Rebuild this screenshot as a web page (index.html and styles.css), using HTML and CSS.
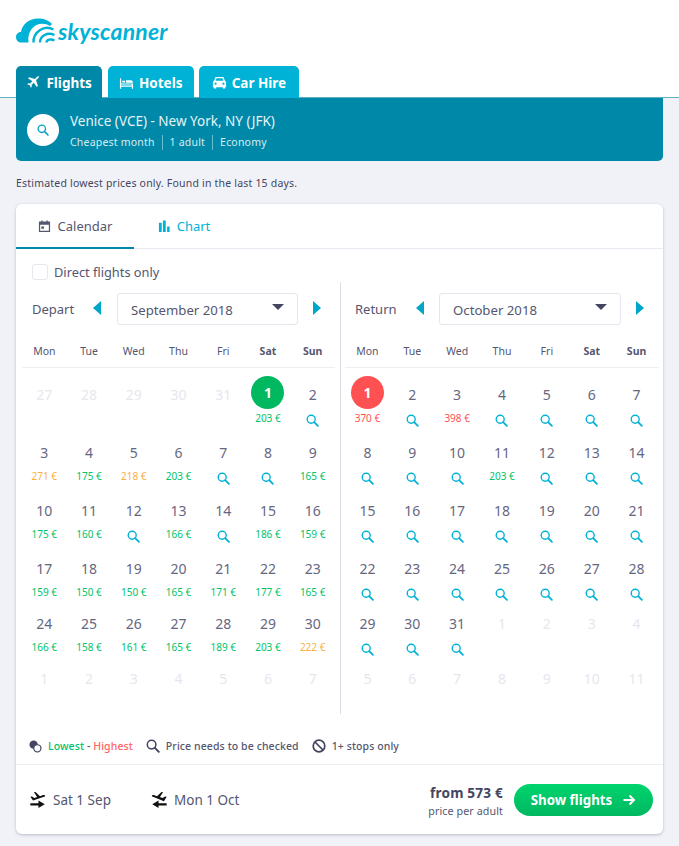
FILE: index.html
```html
<!DOCTYPE html>
<html lang="en">
<head>
<meta charset="utf-8">
<title>Skyscanner</title>
<link rel="stylesheet" href="styles.css">
</head>
<body>
<svg class="defs" width="0" height="0" aria-hidden="true">
  <symbol id="mag" viewBox="0 0 14 14"><circle cx="5.6" cy="5.6" r="4.3" fill="none" stroke="currentColor" stroke-width="1.500"/><path d="M8.800 8.800L12.800 12.800" stroke="currentColor" stroke-width="1.900" stroke-linecap="round"/></symbol>
  <symbol id="plane" viewBox="0 0 24 24"><path fill="currentColor" d="M21.500 2.500c-1-1-2.700-.8-3.800.3l-3.600 3.600L5 3.500 3.200 5.300l7 4.600-3.700 3.800-3-.5L2 14.700l4 1.700 1.800 4 1.500-1.500-.5-3 3.800-3.700 4.600 7 1.800-1.800-2.900-9.100 3.600-3.600c1.100-1.100 1.300-2.800.8-3.700z"/></symbol>
  <symbol id="out" viewBox="0 0 20 20"><path fill="currentColor" d="M1.500 6.500l1.800-.4 2.700 1.700L9 6.800 5.500 1.500 7.200 1l5 4.800 3.500-1.300c1-.4 2-.1 2.200.4.200.6-.3 1.200-1.200 1.600L4.500 10.500z"/><path fill="currentColor" d="M1.500 13.500h9v-3l7 4.300-7 4.200v-3h-9z"/></symbol>
  <symbol id="ret" viewBox="0 0 20 20"><path fill="currentColor" d="M18.500 6.500l-1.800-.4L14 7.800l-3-1 3.500-5.300L12.800 1l-5 4.800-3.500-1.300c-1-.4-2-.1-2.200.4-.2.600.3 1.200 1.200 1.600l12.200 5z"/><path fill="currentColor" d="M18.500 13.500h-9v-3l-7 4.300 7 4.200v-3h9z"/></symbol>
</svg>

<header class="top">
  <div class="logo">
    <svg class="logo-mark" viewBox="0 0 39 25" width="39" height="25" aria-hidden="true">
      <path fill="#00b2d6" d="M5 24.500C2 24.500 0 22 0 19C0 16 2.500 14 5 14C6 7 12 .5 22 .5C28 .5 33 2.500 36 6L34 8C23 1.500 10.500 10 12.500 24.500Z"/>
      <path fill="none" stroke="#00b2d6" stroke-width="2.400" d="M17.500 24.500C17 14 28 6.500 37.500 11.500"/>
      <path fill="none" stroke="#00b2d6" stroke-width="2.400" d="M24 24.500C24 18 31.500 13.500 38.500 17"/>
      <path fill="none" stroke="#00b2d6" stroke-width="2.400" d="M30.500 24.500C30.500 21.500 35 20.500 38.500 22.500"/>
    </svg>
    <span class="logo-text">skyscanner</span>
  </div>
  <nav class="modes">
    <a class="mode mode-on"><svg class="mode-ic" width="15" height="15"><use href="#plane"/></svg>Flights</a>
    <a class="mode"><svg class="mode-ic" viewBox="0 0 16 14" width="15" height="14"><path fill="currentColor" d="M1 2h1.300v5.500H15V13h-1.300v-2H2.300v2H1zM3.500 4.500h3v2h-3zM7.500 4h5c1.500 0 2.500 1 2.500 2.500v.2H7.500zM2.300 8.500v1.200h11.400V8.500z"/></svg>Hotels</a>
    <a class="mode"><svg class="mode-ic" viewBox="0 0 16 14" width="15" height="15"><path fill="currentColor" fill-rule="evenodd" d="M3.800 1h8.400l1.600 4.200c.8.500 1.200 1.200 1.200 2V12h-1v1.500h-2.500V12H4.500v1.500H2V12H1V7.200c0-.8.400-1.500 1.200-2zM4.800 2.500L3.800 5h8.400l-1-2.500zM3.800 7a1.200 1.200 0 100 2.400 1.200 1.200 0 000-2.400zm8.400 0a1.200 1.200 0 100 2.400 1.200 1.200 0 000-2.400z"/></svg>Car Hire</a>
  </nav>
</header>

<main class="page">
  <section class="summary">
    <span class="sum-btn"><svg width="12" height="12"><use href="#mag"/></svg></span>
    <div class="sum-text">
      <div class="sum-route">Venice (VCE) - New York, NY (JFK)</div>
      <div class="sum-meta"><span>Cheapest month</span><span>1 adult</span><span>Economy</span></div>
    </div>
  </section>

  <p class="note">Estimated lowest prices only. Found in the last 15 days.</p>

  <section class="card">
    <div class="tabs">
      <div class="tab tab-on"><svg viewBox="0 0 14 14" width="13" height="13"><path fill="currentColor" fill-rule="evenodd" d="M1 1.500h2.500V.5h1.500v1h4v-1h1.500v1H13V13H1zM2.300 5v6.700h9.400V5zM3.500 7h3v2.500h-3z"/></svg>Calendar</div>
      <div class="tab tab-chart"><svg viewBox="0 0 14 14" width="13" height="13"><path fill="currentColor" d="M1 3h3v10H1zM5.300 .5h3V13h-3zM9.800 7h2.700v6H9.800z"/></svg>Chart</div>
    </div>

    <label class="direct"><span class="check"></span>Direct flights only</label>

    <div class="cals">
      <div class="cal">
        <div class="cal-head">
          <span class="cal-label">Depart</span>
          <span class="arrow arrow-l"></span>
          <div class="select"><span>September 2018</span><i class="caret"></i></div>
          <span class="arrow arrow-r"></span>
        </div>
        <div class="dow"><span>Mon</span><span>Tue</span><span>Wed</span><span>Thu</span><span>Fri</span><b>Sat</b><b>Sun</b></div>
        <div class="grid">
          <div class="d off"><span class="n">27</span></div>
          <div class="d off"><span class="n">28</span></div>
          <div class="d off"><span class="n">29</span></div>
          <div class="d off"><span class="n">30</span></div>
          <div class="d off"><span class="n">31</span></div>
          <div class="d"><span class="n sel-g">1</span><span class="p g">203 €</span></div>
          <div class="d"><span class="n">2</span><svg class="q"><use href="#mag"/></svg></div>

          <div class="d"><span class="n">3</span><span class="p o">271 €</span></div>
          <div class="d"><span class="n">4</span><span class="p g">175 €</span></div>
          <div class="d"><span class="n">5</span><span class="p o">218 €</span></div>
          <div class="d"><span class="n">6</span><span class="p g">203 €</span></div>
          <div class="d"><span class="n">7</span><svg class="q"><use href="#mag"/></svg></div>
          <div class="d"><span class="n">8</span><svg class="q"><use href="#mag"/></svg></div>
          <div class="d"><span class="n">9</span><span class="p g">165 €</span></div>

          <div class="d"><span class="n">10</span><span class="p g">175 €</span></div>
          <div class="d"><span class="n">11</span><span class="p g">160 €</span></div>
          <div class="d"><span class="n">12</span><svg class="q"><use href="#mag"/></svg></div>
          <div class="d"><span class="n">13</span><span class="p g">166 €</span></div>
          <div class="d"><span class="n">14</span><svg class="q"><use href="#mag"/></svg></div>
          <div class="d"><span class="n">15</span><span class="p g">186 €</span></div>
          <div class="d"><span class="n">16</span><span class="p g">159 €</span></div>

          <div class="d"><span class="n">17</span><span class="p g">159 €</span></div>
          <div class="d"><span class="n">18</span><span class="p g">150 €</span></div>
          <div class="d"><span class="n">19</span><span class="p g">150 €</span></div>
          <div class="d"><span class="n">20</span><span class="p g">165 €</span></div>
          <div class="d"><span class="n">21</span><span class="p g">171 €</span></div>
          <div class="d"><span class="n">22</span><span class="p g">177 €</span></div>
          <div class="d"><span class="n">23</span><span class="p g">165 €</span></div>

          <div class="d"><span class="n">24</span><span class="p g">166 €</span></div>
          <div class="d"><span class="n">25</span><span class="p g">158 €</span></div>
          <div class="d"><span class="n">26</span><span class="p g">161 €</span></div>
          <div class="d"><span class="n">27</span><span class="p g">165 €</span></div>
          <div class="d"><span class="n">28</span><span class="p g">189 €</span></div>
          <div class="d"><span class="n">29</span><span class="p g">203 €</span></div>
          <div class="d"><span class="n">30</span><span class="p o">222 €</span></div>

          <div class="d off"><span class="n">1</span></div>
          <div class="d off"><span class="n">2</span></div>
          <div class="d off"><span class="n">3</span></div>
          <div class="d off"><span class="n">4</span></div>
          <div class="d off"><span class="n">5</span></div>
          <div class="d off"><span class="n">6</span></div>
          <div class="d off"><span class="n">7</span></div>
        </div>
      </div>

      <div class="cal cal-right">
        <div class="cal-head">
          <span class="cal-label">Return</span>
          <span class="arrow arrow-l"></span>
          <div class="select"><span>October 2018</span><i class="caret"></i></div>
          <span class="arrow arrow-r"></span>
        </div>
        <div class="dow"><span>Mon</span><span>Tue</span><span>Wed</span><span>Thu</span><span>Fri</span><b>Sat</b><b>Sun</b></div>
        <div class="grid">
          <div class="d"><span class="n sel-r">1</span><span class="p r">370 €</span></div>
          <div class="d"><span class="n">2</span><svg class="q"><use href="#mag"/></svg></div>
          <div class="d"><span class="n">3</span><span class="p r">398 €</span></div>
          <div class="d"><span class="n">4</span><svg class="q"><use href="#mag"/></svg></div>
          <div class="d"><span class="n">5</span><svg class="q"><use href="#mag"/></svg></div>
          <div class="d"><span class="n">6</span><svg class="q"><use href="#mag"/></svg></div>
          <div class="d"><span class="n">7</span><svg class="q"><use href="#mag"/></svg></div>

          <div class="d"><span class="n">8</span><svg class="q"><use href="#mag"/></svg></div>
          <div class="d"><span class="n">9</span><svg class="q"><use href="#mag"/></svg></div>
          <div class="d"><span class="n">10</span><svg class="q"><use href="#mag"/></svg></div>
          <div class="d"><span class="n">11</span><span class="p g">203 €</span></div>
          <div class="d"><span class="n">12</span><svg class="q"><use href="#mag"/></svg></div>
          <div class="d"><span class="n">13</span><svg class="q"><use href="#mag"/></svg></div>
          <div class="d"><span class="n">14</span><svg class="q"><use href="#mag"/></svg></div>

          <div class="d"><span class="n">15</span><svg class="q"><use href="#mag"/></svg></div>
          <div class="d"><span class="n">16</span><svg class="q"><use href="#mag"/></svg></div>
          <div class="d"><span class="n">17</span><svg class="q"><use href="#mag"/></svg></div>
          <div class="d"><span class="n">18</span><svg class="q"><use href="#mag"/></svg></div>
          <div class="d"><span class="n">19</span><svg class="q"><use href="#mag"/></svg></div>
          <div class="d"><span class="n">20</span><svg class="q"><use href="#mag"/></svg></div>
          <div class="d"><span class="n">21</span><svg class="q"><use href="#mag"/></svg></div>

          <div class="d"><span class="n">22</span><svg class="q"><use href="#mag"/></svg></div>
          <div class="d"><span class="n">23</span><svg class="q"><use href="#mag"/></svg></div>
          <div class="d"><span class="n">24</span><svg class="q"><use href="#mag"/></svg></div>
          <div class="d"><span class="n">25</span><svg class="q"><use href="#mag"/></svg></div>
          <div class="d"><span class="n">26</span><svg class="q"><use href="#mag"/></svg></div>
          <div class="d"><span class="n">27</span><svg class="q"><use href="#mag"/></svg></div>
          <div class="d"><span class="n">28</span><svg class="q"><use href="#mag"/></svg></div>

          <div class="d"><span class="n">29</span><svg class="q"><use href="#mag"/></svg></div>
          <div class="d"><span class="n">30</span><svg class="q"><use href="#mag"/></svg></div>
          <div class="d"><span class="n">31</span><svg class="q"><use href="#mag"/></svg></div>
          <div class="d off"><span class="n">1</span></div>
          <div class="d off"><span class="n">2</span></div>
          <div class="d off"><span class="n">3</span></div>
          <div class="d off"><span class="n">4</span></div>

          <div class="d off"><span class="n">5</span></div>
          <div class="d off"><span class="n">6</span></div>
          <div class="d off"><span class="n">7</span></div>
          <div class="d off"><span class="n">8</span></div>
          <div class="d off"><span class="n">9</span></div>
          <div class="d off"><span class="n">10</span></div>
          <div class="d off"><span class="n">11</span></div>
        </div>
      </div>
    </div>

    <div class="legend">
      <span class="leg-item">
        <svg viewBox="0 0 14 14" width="13" height="13"><circle cx="5" cy="5" r="4.500" fill="#444560"/><circle cx="9" cy="9" r="3.900" fill="#fff" stroke="#444560" stroke-width="1.300"/></svg>
        <span><em class="lo">Lowest</em> <em class="dash">-</em> <em class="hi">Highest</em></span>
      </span>
      <span class="leg-item"><svg class="leg-mag" width="14" height="14"><use href="#mag"/></svg>Price needs to be checked</span>
      <span class="leg-item"><svg viewBox="0 0 14 14" width="14" height="14"><circle cx="7" cy="7" r="5.800" fill="none" stroke="#444560" stroke-width="1.700"/><path d="M3 3L11 11" stroke="#444560" stroke-width="1.700"/></svg>1+ stops only</span>
    </div>

    <div class="foot">
      <div class="foot-dates">
        <span class="leg"><svg width="18" height="18"><use href="#out"/></svg>Sat 1 Sep</span>
        <span class="leg"><svg width="18" height="18"><use href="#ret"/></svg>Mon 1 Oct</span>
      </div>
      <div class="foot-price">
        <div class="from">from 573 €</div>
        <div class="per">price per adult</div>
      </div>
      <a class="show">Show flights<svg viewBox="0 0 14 14" width="14" height="14"><path d="M1.500 7H12M7.500 2.500L12 7l-4.500 4.500" fill="none" stroke="#fff" stroke-width="2"/></svg></a>
    </div>
  </section>
</main>
</body>
</html>
```

FILE: styles.css
```css
* { box-sizing: border-box; }
html, body { margin: 0; padding: 0; }
body {
  background: #f1f2f8;
  font-family: "Noto Sans", "Open Sans", sans-serif;
  color: #55566f;
  height: 846px;
  overflow: hidden;
}
.defs { position: absolute; }

.top {
  background: #fff;
  height: 98px;
  padding: 18px 16px 0;
  border-bottom: 1px solid #5fb0c4;
}
.logo { display: flex; align-items: flex-start; height: 31px; gap: 3px; }
.logo-mark { display: block; }
.logo-text {
  color: #00b2d6;
  font-family: "Lato", sans-serif;
  font-size: 23px;
  font-weight: 700;
  font-style: italic;
  line-height: 26px;
  letter-spacing: 0.2px;
}
.modes { display: flex; gap: 5.300px; margin-top: 17px; height: 32px; }
.mode {
  display: flex;
  align-items: center;
  justify-content: center;
  gap: 5px;
  background: #00b2d6;
  color: #fff;
  font-size: 13.500px;
  font-weight: 700;
  width: 86.300px;
  height: 32px;
  padding-top: 1px;
  border-radius: 5px 5px 0 0;
}
.mode:last-child { width: 99.400px; }
.mode-on { background: #0088a8; }
.mode-ic { flex: none; }

.page { padding: 0 16px; }
.summary {
  background: #0088a8;
  height: 63px;
  border-radius: 0 0 5px 5px;
  display: flex;
  align-items: center;
  padding: 0 11px;
  gap: 11px;
  color: #fff;
}
.sum-btn {
  width: 32px;
  height: 32px;
  border-radius: 50%;
  background: #fff;
  color: #00a0c4;
  display: flex;
  align-items: center;
  justify-content: center;
}
.sum-text { padding-top: 2px; }
.sum-route { font-size: 13.500px; line-height: 20px; color: #e6f4f8; }
.sum-meta { display: flex; font-size: 10.500px; line-height: 15px; margin-top: 4px; color: #d7edf3; letter-spacing: 0.2px; }
.sum-meta span { padding: 0 7px; border-left: 1px solid #6cbccf; }
.sum-meta span:first-child { padding-left: 0; border-left: 0; }

.note { margin: 15px 0 13px; font-size: 10.500px; line-height: 15px; color: #444560; letter-spacing: 0.2px; }

.card {
  background: #fff;
  border-radius: 6px;
  height: 630px;
  box-shadow: 0 1px 3px rgba(60, 60, 80, 0.3);
  display: flex;
  flex-direction: column;
}
.tabs { display: flex; height: 45px; border-bottom: 1px solid #e8e9f1; flex: none; }
.tab {
  display: flex;
  align-items: center;
  justify-content: center;
  gap: 7px;
  width: 118px;
  height: 45px;
  font-size: 13px;
  padding-bottom: 1px;
}
.tab-on { border-bottom: 2px solid #0088a8; padding: 1px 0 0; }
.tab-chart { color: #00b2d6; width: 100px; gap: 6px; }

.direct { display: flex; align-items: center; gap: 6px; height: 24px; margin: 11px 0 0 16px; font-size: 12.800px; flex: none; }
.check { width: 16px; height: 16px; border: 1px solid #e5e6ee; border-radius: 3px; }

.cals { display: grid; grid-template-columns: 324px 323px; grid-template-rows: 432px; margin-top: -2px; flex: none; }
.cal { padding: 10px 5px 0 6px; }
.cal-right { border-left: 1px solid #dcdde5; padding: 10px 4px 0 4px; }
.cal-head { display: flex; align-items: center; height: 33px; padding-left: 10px; }
.cal-label { width: 61px; font-size: 13px; }
.arrow { width: 0; height: 0; border-top: 7px solid transparent; border-bottom: 7px solid transparent; margin-top: -2px; }
.arrow-l { border-right: 8px solid #00a6ca; margin-right: 16px; }
.arrow-r { border-left: 8px solid #00a6ca; margin-left: 15px; }
.select {
  width: 181px;
  height: 32px;
  border: 1px solid #e5e6ee;
  border-radius: 3px;
  display: flex;
  align-items: center;
  justify-content: space-between;
  padding: 2px 13px 0 13px;
  font-size: 13.200px;
}
.cal-right .select { width: 182px; }
.cal-right .arrow-l { margin-right: 15px; }
.caret { width: 0; height: 0; border-left: 6px solid transparent; border-right: 6px solid transparent; border-top: 6px solid #444560; margin-top: -5px; }

.dow {
  display: grid;
  grid-template-columns: repeat(7, 1fr);
  margin-top: 10px;
  height: 33px;
  border-bottom: 1px solid #eeeff5;
  align-items: center;
  text-align: center;
  font-size: 10.500px;
}
.dow span, .dow b { padding-bottom: 1px; }
.dow b { font-weight: 700; }

.grid {
  display: grid;
  grid-template-columns: repeat(7, 1fr);
  grid-template-rows: 58px 58px 58px 55px 55px 46px;
  padding-top: 8px;
}
.d { display: flex; flex-direction: column; align-items: center; }
.n { width: 33px; height: 33px; border-radius: 50%; display: flex; align-items: center; justify-content: center; font-size: 14px; padding-top: 3px; color: #66677f; flex: none; }
.off .n { color: #e6e7ee; }
.sel-g, .sel-r { color: #fff; font-weight: 700; padding-top: 0; }
.sel-g { background: #00b860; }
.sel-r { background: #ff5052; }
.p { font-size: 10px; line-height: 14px; margin-top: 2px; }
.g { color: #00c46a; }
.o { color: #fbb03b; }
.r { color: #ff5052; }
.q { width: 13px; height: 13px; color: #00b2d6; margin-top: 5px; flex: none; }

.legend { display: flex; align-items: center; gap: 13px; margin-top: 15px; font-size: 10.500px; letter-spacing: 0.1px; font-weight: 500; flex: none; border-bottom: 1px solid #eeeff5; height: 36px; padding: 0 0 1px 13px; }
.leg-item { display: flex; align-items: center; gap: 6px; }
.legend em { font-style: normal; }
.lo { color: #00c46a; }
.hi { color: #ff6466; }
.leg-mag { color: #444560; }

.foot { display: flex; align-items: center; flex: 1; padding: 0 10px 0 13px; }
.foot-dates { display: flex; gap: 20px; flex: 1; font-size: 13.500px; }
.leg { display: flex; align-items: center; gap: 6px; width: 101px; flex: none; }
.leg svg { color: #111; flex: none; }
.foot-price { text-align: right; margin-right: 11px; padding-top: 3px; }
.from { font-size: 13.600px; font-weight: 700; line-height: 20px; color: #444560; letter-spacing: 0.2px; }
.per { font-size: 10.700px; line-height: 16px; letter-spacing: 0.1px; }
.show {
  display: flex;
  align-items: center;
  justify-content: center;
  gap: 10px;
  width: 139px;
  height: 32px;
  border-radius: 16px;
  background: linear-gradient(#00d46e, #00b860);
  color: #fff;
  font-size: 13.300px;
  font-weight: 700;
}
```
